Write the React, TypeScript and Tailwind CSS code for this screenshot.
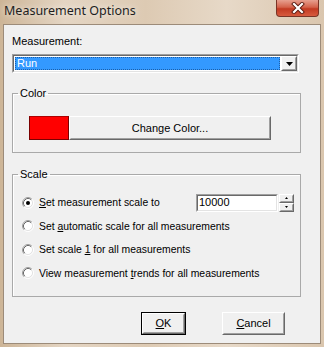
import React from "react";

const font = { fontFamily: '"Liberation Sans", Arial, sans-serif' };

function Radio({ checked }: { checked?: boolean }) {
  return (
    <svg width="12" height="12" viewBox="0 0 12 12" className="shrink-0">
      <circle cx="6" cy="6" r="4.5" fill="#ffffff" />
      <path d="M2.11 9.89 A5.5 5.5 0 0 1 9.89 2.11" stroke="#a0a0a0" strokeWidth="1" fill="none" />
      <path d="M9.89 2.11 A5.5 5.5 0 0 1 2.11 9.89" stroke="#ffffff" strokeWidth="1" fill="none" />
      <path d="M2.82 9.18 A4.5 4.5 0 0 1 9.18 2.82" stroke="#696969" strokeWidth="1" fill="none" />
      <path d="M9.18 2.82 A4.5 4.5 0 0 1 2.82 9.18" stroke="#e3e3e3" strokeWidth="1" fill="none" />
      {checked && <circle cx="6" cy="6" r="2" fill="#000000" />}
    </svg>
  );
}

function RadioRow({ checked, children, right }: { checked?: boolean; children: React.ReactNode; right?: React.ReactNode }) {
  return (
    <div className="flex h-[23.5px] items-center pl-[9px]">
      <Radio checked={checked} />
      <span className="ml-[5px] text-[10.4px] leading-[13px] text-black">{children}</span>
      {right}
    </div>
  );
}

function Raised({ className = "", children }: { className?: string; children?: React.ReactNode }) {
  return (
    <div className={"border border-t-white border-l-white border-r-[#696969] border-b-[#696969] bg-[#f0f0f0] " + className}>
      <div className="flex h-full w-full items-center justify-center border border-t-[#f0f0f0] border-l-[#f0f0f0] border-r-[#a0a0a0] border-b-[#a0a0a0]">
        {children}
      </div>
    </div>
  );
}

export default function App() {
  return (
    <div
      className="flex h-[347px] w-[324px] flex-col bg-[linear-gradient(90deg,#cdb597,#e4d5c3_20%,#ddcab3_45%,#e7d9c8_70%,#dac6ae)]"
      style={font}
    >
      {/* title bar */}
      <div className="flex h-[24px] items-start justify-between">
        <div
          className="ml-[4px] mt-[2px] text-[12.5px] leading-[17px] text-[#1e1e1e] [text-shadow:0_0_6px_rgba(255,255,255,0.9)]"
          style={{ fontFamily: '"Noto Sans", "Open Sans", sans-serif' }}
        >
          Measurement Options
        </div>
        <div className="mr-[5px] flex h-[17px] w-[43px] items-center justify-center rounded-b-[4px] border border-t-0 border-[#7a3426] bg-[linear-gradient(180deg,#e7a08f,#d4624b_45%,#c23a22_55%,#d75a3e)]">
          <svg width="14" height="12" viewBox="0 0 14 12">
            <path d="M3 2 L11 10 M11 2 L3 10" stroke="#5a1a10" strokeWidth="4" strokeLinecap="square" />
            <path d="M3 2 L11 10 M11 2 L3 10" stroke="#ffffff" strokeWidth="2.2" strokeLinecap="square" />
          </svg>
        </div>
      </div>

      {/* client area */}
      <div className="mx-[3px] h-[320px] w-[318px] border border-[#9c8b79] bg-[#f0f0f0]">
        <div className="flex flex-col px-[8px]">
          <div className="mt-[10px] text-[11px] leading-[13px] text-black">Measurement:</div>

          {/* combobox */}
          <div className="mt-[6px] flex h-[19px] w-[287px] border border-t-[#a0a0a0] border-l-[#a0a0a0] border-r-white border-b-white">
            <div className="flex flex-1 border border-t-[#696969] border-l-[#696969] border-r-[#e3e3e3] border-b-[#e3e3e3] bg-white">
              <div className="m-[1px] flex flex-1 items-center border border-dotted border-[#1c5fa8] bg-[#3399ff] pl-[1px] text-[11px] leading-[13px] text-white">
                Run
              </div>
              <Raised className="h-full w-[16px]">
                <svg width="7" height="4" viewBox="0 0 7 4">
                  <path d="M0 0 H7 L3.5 4 Z" fill="#000" />
                </svg>
              </Raised>
            </div>
          </div>

          {/* Color group */}
          <fieldset className="mt-[14px] w-[289px] border border-[#a9a9a9] pb-[12px] shadow-[inset_1px_1px_0_#ffffff]">
            <legend className="ml-[5px] px-[2px] text-[11px] leading-[13px] text-black">Color</legend>
            <div className="ml-[16px] mt-[16px] flex h-[24px]">
              <div className="h-[24px] w-[40px] border border-[#7a0000] border-t-[#b00000] bg-[#ff0000]" />
              <Raised className="h-[24px] w-[202px]">
                <span className="text-[11px] leading-[13px] text-black">Change Color...</span>
              </Raised>
            </div>
          </fieldset>

          {/* Scale group */}
          <fieldset className="mt-[15px] w-[289px] border border-[#a9a9a9] pb-[11px] shadow-[inset_1px_1px_0_#ffffff]">
            <legend className="ml-[5px] px-[2px] text-[11px] leading-[13px] text-black">Scale</legend>
            <div className="mt-[10px] flex flex-col">
              <RadioRow
                checked
                right={
                  <div className="ml-auto mr-[6px] flex items-center">
                    <div className="flex h-[18px] w-[82px] border border-t-[#a0a0a0] border-l-[#a0a0a0] border-r-white border-b-white">
                      <div className="flex flex-1 items-center border border-t-[#696969] border-l-[#696969] border-r-[#e3e3e3] border-b-[#e3e3e3] bg-white pl-[1px] text-[11px] leading-[13px] text-black">
                        10000
                      </div>
                    </div>
                    <div className="ml-[1px] flex h-[18px] w-[15px] flex-col">
                      <Raised className="h-[9px] w-[15px]">
                        <svg width="3" height="2" viewBox="0 0 3 2">
                          <path d="M1.5 0 L3 2 H0 Z" fill="#000" />
                        </svg>
                      </Raised>
                      <Raised className="h-[9px] w-[15px]">
                        <svg width="3" height="2" viewBox="0 0 3 2">
                          <path d="M0 0 H3 L1.5 2 Z" fill="#000" />
                        </svg>
                      </Raised>
                    </div>
                  </div>
                }
              >
                <span className="underline underline-offset-1">S</span>et measurement scale to
              </RadioRow>
              <RadioRow>
                Set <span className="underline underline-offset-1">a</span>utomatic scale for all measurements
              </RadioRow>
              <RadioRow>
                Set scale <span className="underline underline-offset-1">1</span> for all measurements
              </RadioRow>
              <RadioRow>
                View measurement <span className="underline underline-offset-1">t</span>rends for all measurements
              </RadioRow>
            </div>
          </fieldset>

          {/* buttons */}
          <div className="mt-[15px] flex pl-[129px]">
            <div className="h-[23px] w-[45px] border border-black">
              <Raised className="h-full w-full">
                <span className="text-[11px] leading-[13px] text-black">
                  <span className="underline underline-offset-1">O</span>K
                </span>
              </Raised>
            </div>
            <Raised className="ml-[36px] h-[23px] w-[63px]">
              <span className="text-[11px] leading-[13px] text-black">
                <span className="underline underline-offset-1">C</span>ancel
              </span>
            </Raised>
          </div>
        </div>
      </div>
    </div>
  );
}
